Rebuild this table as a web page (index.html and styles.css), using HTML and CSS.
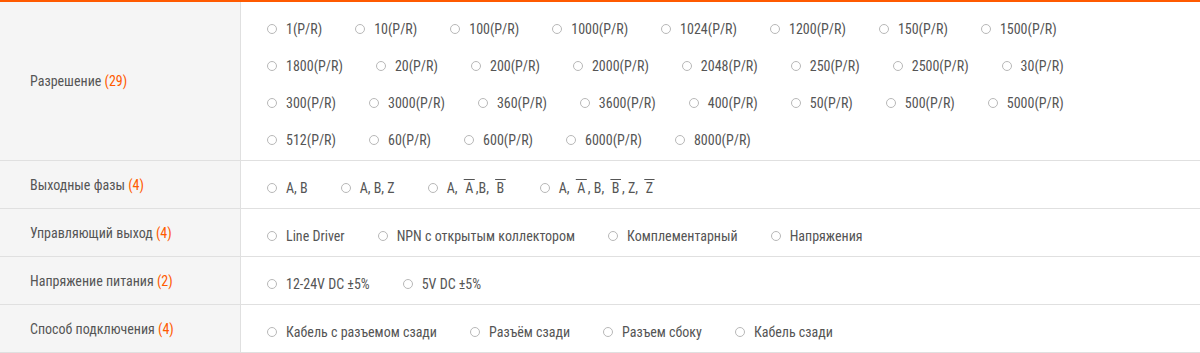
FILE: index.html
```html
<!DOCTYPE html>
<html lang="ru">
<head>
<meta charset="utf-8">
<title>Фильтры</title>
<link rel="stylesheet" href="styles.css">
</head>
<body>
<div class="filters">
  <div class="row">
    <div class="label">Разрешение <span class="count">(29)</span></div>
    <div class="opts">
      <label class="opt"><span class="radio"></span>1(P/R)</label>
      <label class="opt"><span class="radio"></span>10(P/R)</label>
      <label class="opt"><span class="radio"></span>100(P/R)</label>
      <label class="opt"><span class="radio"></span>1000(P/R)</label>
      <label class="opt"><span class="radio"></span>1024(P/R)</label>
      <label class="opt"><span class="radio"></span>1200(P/R)</label>
      <label class="opt"><span class="radio"></span>150(P/R)</label>
      <label class="opt"><span class="radio"></span>1500(P/R)</label>
      <label class="opt"><span class="radio"></span>1800(P/R)</label>
      <label class="opt"><span class="radio"></span>20(P/R)</label>
      <label class="opt"><span class="radio"></span>200(P/R)</label>
      <label class="opt"><span class="radio"></span>2000(P/R)</label>
      <label class="opt"><span class="radio"></span>2048(P/R)</label>
      <label class="opt"><span class="radio"></span>250(P/R)</label>
      <label class="opt"><span class="radio"></span>2500(P/R)</label>
      <label class="opt"><span class="radio"></span>30(P/R)</label>
      <label class="opt"><span class="radio"></span>300(P/R)</label>
      <label class="opt"><span class="radio"></span>3000(P/R)</label>
      <label class="opt"><span class="radio"></span>360(P/R)</label>
      <label class="opt"><span class="radio"></span>3600(P/R)</label>
      <label class="opt"><span class="radio"></span>400(P/R)</label>
      <label class="opt"><span class="radio"></span>50(P/R)</label>
      <label class="opt"><span class="radio"></span>500(P/R)</label>
      <label class="opt"><span class="radio"></span>5000(P/R)</label>
      <label class="opt"><span class="radio"></span>512(P/R)</label>
      <label class="opt"><span class="radio"></span>60(P/R)</label>
      <label class="opt"><span class="radio"></span>600(P/R)</label>
      <label class="opt"><span class="radio"></span>6000(P/R)</label>
      <label class="opt"><span class="radio"></span>8000(P/R)</label>
    </div>
  </div>
  <div class="row">
    <div class="label">Выходные фазы <span class="count">(4)</span></div>
    <div class="opts">
      <label class="opt"><span class="radio"></span>A, B</label>
      <label class="opt"><span class="radio"></span>A, B, Z</label>
      <label class="opt"><span class="radio"></span>A, <span class="ov">&#8202;A&#8202;</span>,B, <span class="ov">&#8202;B&#8202;</span></label>
      <label class="opt"><span class="radio"></span>A, <span class="ov">&#8202;A&#8202;</span>, B, <span class="ov">&#8202;B&#8202;</span>, Z, <span class="ov">&#8202;Z&#8202;</span></label>
    </div>
  </div>
  <div class="row">
    <div class="label">Управляющий выход <span class="count">(4)</span></div>
    <div class="opts">
      <label class="opt"><span class="radio"></span>Line Driver</label>
      <label class="opt"><span class="radio"></span>NPN с открытым коллектором</label>
      <label class="opt"><span class="radio"></span>Комплементарный</label>
      <label class="opt"><span class="radio"></span>Напряжения</label>
    </div>
  </div>
  <div class="row">
    <div class="label">Напряжение питания <span class="count">(2)</span></div>
    <div class="opts">
      <label class="opt"><span class="radio"></span>12-24V DC ±5%</label>
      <label class="opt"><span class="radio"></span>5V DC ±5%</label>
    </div>
  </div>
  <div class="row">
    <div class="label">Способ подключения <span class="count">(4)</span></div>
    <div class="opts">
      <label class="opt"><span class="radio"></span>Кабель с разъемом сзади</label>
      <label class="opt"><span class="radio"></span>Разъём сзади</label>
      <label class="opt"><span class="radio"></span>Разъем сбоку</label>
      <label class="opt"><span class="radio"></span>Кабель сзади</label>
    </div>
  </div>
</div>
</body>
</html>
```
FILE: styles.css
```css
html, body {
  margin: 0;
  padding: 0;
  background: #ffffff;
}

body {
  font-family: "Roboto Condensed", Roboto, "Liberation Sans", sans-serif;
  font-stretch: 80%;
  font-size: 14px;
  color: #555555;
}

.filters {
  border-top: 2px solid #ff5a00;
}

.row {
  display: flex;
  border-bottom: 1px solid #e0e0e0;
}

.label {
  flex: 0 0 241px;
  box-sizing: border-box;
  background: #f5f5f5;
  border-right: 1px solid #e0e0e0;
  display: flex;
  align-items: center;
  padding-left: 30px;
  white-space: pre;
}

.count {
  color: #ff5a00;
}

.opts {
  flex: 1;
  display: flex;
  flex-wrap: wrap;
  padding: 8px 30px 2px 26px;
}

.opt {
  height: 37px;
  display: flex;
  align-items: center;
  margin-right: 33px;
  white-space: pre;
}

.radio {
  width: 10px;
  height: 10px;
  box-sizing: border-box;
  border: 1px solid #b8b8b8;
  border-radius: 50%;
  margin-right: 9px;
  flex: none;
}

.ov {
  text-decoration: overline;
  margin: 0 1px 0 3px;
}
```
